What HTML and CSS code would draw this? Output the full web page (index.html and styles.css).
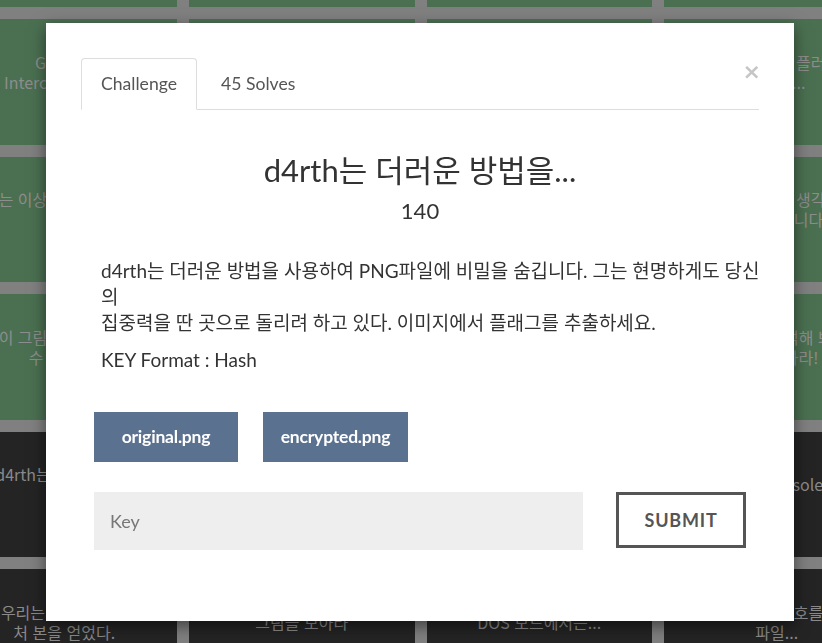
FILE: index.html
```html
<!DOCTYPE html>
<html lang="ko">
<head>
    <meta charset="UTF-8">
    <meta name="viewport" content="width=device-width, initial-scale=1.0">
    <title>Challenges</title>
    <link rel="stylesheet" href="styles.css">
</head>
<body>
    <div class="board">
        <div class="tile solved"><span>Hidden Layer<br>200</span></div>
        <div class="tile solved"><span>Packet<br>150</span></div>
        <div class="tile solved"><span>Wave<br>100</span></div>
        <div class="tile solved"><span>Audio<br>100</span></div>

        <div class="tile solved"><span>Gift box<br>Interchange File<br>100</span></div>
        <div class="tile solved"><span>Memory<br>150</span></div>
        <div class="tile solved"><span>Broken<br>200</span></div>
        <div class="tile solved"><span>브라우저 확장 플러그인<br>무엇이...<br>100</span></div>

        <div class="tile solved"><span>그녀는 이상한 메일을 보냈다<br>_<br>150</span></div>
        <div class="tile solved"><span>Zip<br>100</span></div>
        <div class="tile solved"><span>Stream<br>200</span></div>
        <div class="tile solved"><span>그는 무슨 생각<br>찾아야 합니다<br>150</span></div>

        <div class="tile solved"><span>당신은 이 그림에서 어떤 것을 찾을<br>수 있나요?<br>200</span></div>
        <div class="tile solved"><span>Frame<br>100</span></div>
        <div class="tile solved"><span>Header<br>150</span></div>
        <div class="tile solved"><span>그림을 분석해 봐<br>답을 찾아라!<br>100</span></div>

        <div class="tile"><span>d4rth는 더러운 방법<br>을...<br>140</span></div>
        <div class="tile"><span>Disk<br>200</span></div>
        <div class="tile"><span>Slack<br>250</span></div>
        <div class="tile"><span>The Console<br>200</span></div>

        <div class="tile"><span>우리는 메모리 덤프<br>처 본을 얻었다.<br>200</span></div>
        <div class="tile"><span>그림을 모아라<br>&nbsp;</span></div>
        <div class="tile"><span>DOS 모드에서는...<br>&nbsp;</span></div>
        <div class="tile"><span>숨겨진 암호를<br>파일...<br>250</span></div>
    </div>

    <div class="backdrop">
        <div class="modal">
            <span class="close">&times;</span>
            <ul class="tabs">
                <li class="tab active">Challenge</li>
                <li class="tab">45 Solves</li>
            </ul>
            <div class="pane">
                <h3 class="chal-name">d4rth는 더러운 방법을...</h3>
                <h4 class="chal-value">140</h4>
                <div class="chal-desc">
                    <p>d4rth는 더러운 방법을 사용하여 PNG파일에 비밀을 숨깁니다. 그는 현명하게도 당신<br>의<br>집중력을 딴 곳으로 돌리려 하고 있다. 이미지에서 플래그를 추출하세요.</p>
                    <p>KEY Format : Hash</p>
                </div>
                <div class="files">
                    <a class="file-btn" href="#">original.png</a>
                    <a class="file-btn" href="#">encrypted.png</a>
                </div>
                <form class="answer">
                    <input class="key-input" type="text" placeholder="Key">
                    <button class="submit-btn" type="button">SUBMIT</button>
                </form>
            </div>
        </div>
    </div>
</body>
</html>
```

FILE: styles.css
```css
body {
    margin: 0;
    overflow: hidden;
    background-color: #808080;
    font-family: "Lato", "Noto Sans CJK KR", sans-serif;
}

/* challenge board behind the modal (already dimmed) */
.board {
    display: grid;
    grid-template-columns: repeat(4, 225.5px);
    grid-auto-rows: 125.5px;
    gap: 12px;
    margin: -118.5px 0 0 -48.5px;
}

.tile {
    display: flex;
    align-items: center;
    justify-content: center;
    background-color: #242424;
    color: #8a8a8a;
    font-family: "Noto Sans CJK KR", sans-serif;
    font-size: 16px;
    line-height: 20px;
    text-align: center;
    white-space: nowrap;
}

.tile.solved {
    background-color: #4b7051;
    color: #8d8d8d;
}

/* modal */
.backdrop {
    position: fixed;
    top: 0;
    left: 0;
    right: 0;
    bottom: 0;
}

.modal {
    position: relative;
    box-sizing: border-box;
    width: 748px;
    height: 598px;
    margin: 23px 0 0 46px;
    padding: 35px 35px 0 35px;
    background-color: #fff;
    box-shadow: 0 5px 15px rgba(0, 0, 0, 0.5);
}

.close {
    position: absolute;
    top: 34px;
    right: 33px;
    color: #c6c6c6;
    font-family: "DejaVu Sans", sans-serif;
    font-size: 22px;
    font-weight: bold;
    line-height: 30px;
}

.tabs {
    display: flex;
    margin: 0;
    padding: 0;
    list-style: none;
    border-bottom: 1px solid #ddd;
}

.tab {
    margin-bottom: -1px;
    padding: 13px 19px;
    border: 1px solid transparent;
    border-radius: 4px 4px 0 0;
    color: #555;
    font-size: 17.6px;
    line-height: 24px;
}

.tab + .tab {
    margin-left: 4px;
}

.tab.active {
    border-color: #ddd #ddd #fff;
    background-color: #fff;
}

.chal-name {
    margin: 42px 0 9px;
    color: #333;
    font-size: 31px;
    font-weight: normal;
    line-height: 1.2;
    text-align: center;
}

.chal-value {
    margin: 0;
    color: #333;
    font-size: 22px;
    font-weight: normal;
    line-height: 1.2;
    text-align: center;
}

.chal-desc {
    margin: 33px -30px 0 0;
    padding-left: 20px;
    color: #333;
    font-size: 19px;
    line-height: 26px;
}

.chal-desc p {
    margin: 0 0 11px;
}

.files {
    display: flex;
    gap: 25px;
    margin-top: 39px;
    padding-left: 13px;
}

.file-btn {
    display: block;
    width: 144px;
    height: 50px;
    box-sizing: border-box;
    background-color: #5b7190;
    color: #fff;
    font-size: 17.5px;
    font-weight: bold;
    line-height: 50px;
    text-align: center;
    text-decoration: none;
    letter-spacing: -0.2px;
}

.file-btn + .file-btn {
    width: 145px;
}

.answer {
    display: flex;
    align-items: flex-start;
    gap: 33px;
    margin: 30px 0 0;
    padding-left: 13px;
}

.key-input {
    width: 489px;
    height: 58px;
    box-sizing: border-box;
    padding: 0 16px;
    border: none;
    background-color: #eee;
    font-family: "Lato", sans-serif;
    font-size: 18px;
    color: #333;
}

.key-input::placeholder {
    color: #777;
}

.submit-btn {
    width: 130px;
    height: 56px;
    box-sizing: border-box;
    border: 3px solid #555;
    background-color: #fff;
    color: #555;
    font-family: "Lato", sans-serif;
    font-size: 18px;
    font-weight: bold;
    letter-spacing: 0.8px;
}
```
